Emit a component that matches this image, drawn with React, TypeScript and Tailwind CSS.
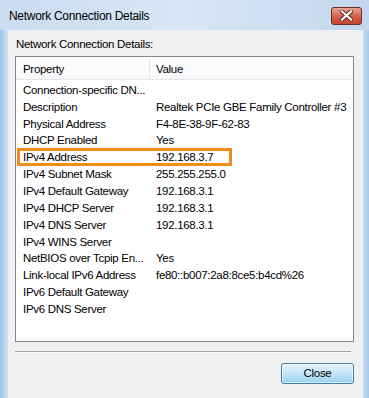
import React from "react";

const rows: [string, string][] = [
  ["Connection-specific DN...", ""],
  ["Description", "Realtek PCIe GBE Family Controller #3"],
  ["Physical Address", "F4-8E-38-9F-62-83"],
  ["DHCP Enabled", "Yes"],
  ["IPv4 Address", "192.168.3.7"],
  ["IPv4 Subnet Mask", "255.255.255.0"],
  ["IPv4 Default Gateway", "192.168.3.1"],
  ["IPv4 DHCP Server", "192.168.3.1"],
  ["IPv4 DNS Server", "192.168.3.1"],
  ["IPv4 WINS Server", ""],
  ["NetBIOS over Tcpip En...", "Yes"],
  ["Link-local IPv6 Address", "fe80::b007:2a8:8ce5:b4cd%26"],
  ["IPv6 Default Gateway", ""],
  ["IPv6 DNS Server", ""],
];

export default function App() {
  return (
    <div
      className="w-[369px] h-[398px] flex flex-col overflow-hidden bg-gradient-to-b from-[#c4d9ef] to-[#b3cfec] text-black tracking-[-0.3px]"
      style={{ fontFamily: '"Liberation Sans", Arial, sans-serif' }}
    >
      {/* title bar */}
      <div className="h-[30px] shrink-0 flex items-center justify-between pl-[9px] pr-[7px] bg-gradient-to-r from-[#cadcf0] via-[#d8e6f4] to-[#c2d7ee]">
        <span className="text-[12px] leading-[16px] text-black mt-[1px]">Network Connection Details</span>
        <div className="w-[31px] h-[18px] mt-[1px] rounded-[3px] border border-[#6b2b22] bg-gradient-to-b from-[#e9a496] via-[#d46450] to-[#c2432d] flex items-center justify-center">
          <svg width="13" height="11" viewBox="0 0 13 11">
            <path d="M2 1.5 L11 9.5 M11 1.5 L2 9.5" stroke="#5a2118" strokeWidth="4" strokeLinecap="square" />
            <path d="M2 1.5 L11 9.5 M11 1.5 L2 9.5" stroke="#ffffff" strokeWidth="2.2" strokeLinecap="square" />
          </svg>
        </div>
      </div>

      <div className="flex flex-1 min-h-0">
        <div className="w-[8px] shrink-0 bg-gradient-to-r from-[#9cc2ea] to-[#d5e3f1]" />

        {/* client area */}
        <div className="flex-1 min-w-0 bg-[#f0f0f0] flex flex-col pl-[7px] pr-[9px]">
          <div className="h-[26px] pt-[8px] pl-[1px] text-[11.5px] leading-[13px]">Network Connection Details:</div>

          <div className="relative h-[286px] border border-[#828790] bg-white text-[11.5px] leading-[13px]">
            <div className="flex h-[23px] pt-[2px] border-b border-[#e3e6ea] bg-gradient-to-b from-white to-[#f7f8fa]">
              <div className="w-[134px] shrink-0 border-r border-[#e3e5e9] pl-[7px] flex items-center">Property</div>
              <div className="flex-1 pl-[6px] flex items-center">Value</div>
            </div>
            <div className="pt-[2px]">
              {rows.map(([k, v]) => (
                <div key={k} className="flex h-[16.85px] items-center">
                  <div className="w-[134px] shrink-0 pl-[7px] whitespace-nowrap overflow-hidden">{k}</div>
                  <div className="flex-1 min-w-0 pl-[6px] whitespace-nowrap overflow-hidden">{v}</div>
                </div>
              ))}
            </div>
            <div className="absolute left-[1px] top-[91px] w-[215px] h-[18px] border-[3px] border-[#f28c1a]" />
          </div>

          <div className="mt-[9px] mr-[3px] border-t border-[#a0a0a0] border-b border-b-white" />

          <div className="flex justify-end mt-[10px]">
            <button className="w-[73px] h-[21px] rounded-[3px] border border-[#3c7fb1] bg-gradient-to-b from-[#e5f4fc] via-[#c4e5f6] to-[#98d1ef] shadow-[inset_0_0_0_1px_#ffffffaa] text-[11.5px] leading-[13px]">
              Close
            </button>
          </div>
        </div>

        <div className="w-[6px] shrink-0 bg-gradient-to-r from-[#c9dcef] to-[#a9c9ea]" />
      </div>
    </div>
  );
}
